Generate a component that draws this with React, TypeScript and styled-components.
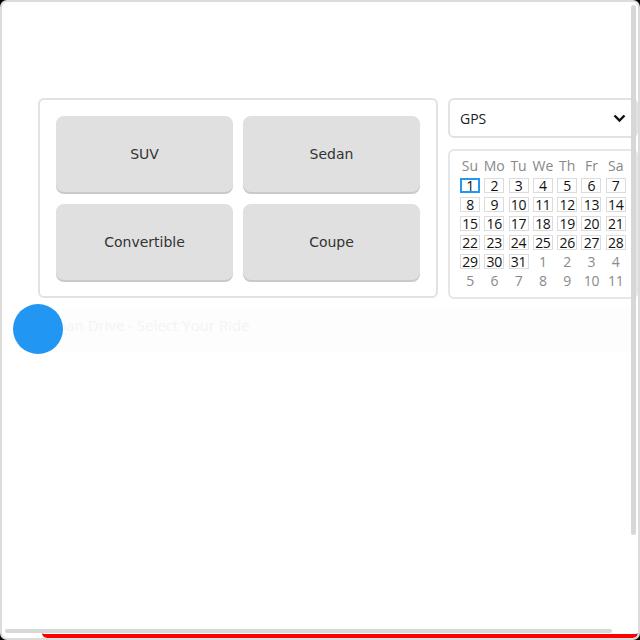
import React from "react";
import styled, { createGlobalStyle } from "styled-components";

const Global = createGlobalStyle`
  html, body { margin: 0; padding: 0; background: #000; }
  #root { width: 640px; height: 640px; }
  * { box-sizing: border-box; }
`;

const Frame = styled.div`
  width: 640px;
  height: 640px;
  border: 2px solid #dcdcdc;
  border-radius: 7px;
  background: #fff;
  overflow: hidden;
  display: flex;
  flex-direction: column;
  position: relative;
`;

const Scroller = styled.div`
  flex: 1;
  overflow: hidden;
  position: relative;
`;

const Content = styled.div`
  padding: 96px 0 0 36px;
  display: flex;
  flex-direction: column;
`;

const TopRow = styled.div`
  display: flex;
  gap: 10px;
  align-items: flex-start;
`;

const Panel = styled.div`
  width: 400px;
  height: 200px;
  border: 2px solid #e2e2e2;
  border-radius: 6px;
  padding: 16px;
  display: grid;
  grid-template-columns: 1fr 1fr;
  column-gap: 10px;
  row-gap: 12px;
`;

const TypeButton = styled.button`
  height: 76px;
  border: none;
  border-radius: 8px;
  background: #e0e0e0;
  box-shadow: 0 2px 0 #c9c9c9;
  font-family: "DejaVu Sans", Verdana, sans-serif;
  font-size: 14px;
  color: #333;
  cursor: pointer;
  padding: 0;
`;

const Side = styled.div`
  width: 190px;
  display: flex;
  flex-direction: column;
  gap: 11px;
`;

const Select = styled.div`
  height: 40px;
  border: 2px solid #e2e2e2;
  border-radius: 6px;
  display: flex;
  align-items: center;
  justify-content: space-between;
  padding: 0 10px 0 10px;
  font-family: "Open Sans", "Liberation Sans", sans-serif;
  font-size: 14px;
  color: #222;
`;

const Calendar = styled.div`
  height: 150px;
  border: 2px solid #e6e6e6;
  border-radius: 6px;
  padding: 8px 6px 8px 10px;
  display: grid;
  grid-template-columns: repeat(7, 1fr);
  grid-auto-rows: 15px;
  row-gap: 4px;
  font-family: "Open Sans", "Liberation Sans", sans-serif;
  font-size: 14px;
`;

const DayName = styled.div`
  width: 20px;
  line-height: 13px;
  color: #888;
  white-space: nowrap;
  display: flex;
  justify-content: center;
`;

const Day = styled.div<{ $current: boolean; $selected?: boolean }>`
  width: 20px;
  height: 15px;
  line-height: ${(p) => (p.$selected ? "11px" : "13px")};
  white-space: nowrap;
  display: flex;
  justify-content: center;
  color: ${(p) => (p.$current ? "#111" : "#8a8a8a")};
  border: ${(p) =>
    p.$selected ? "2px solid #2196f3" : p.$current ? "1px solid #dcdcdc" : "1px solid transparent"};
  letter-spacing: -0.3px;
`;

const HeadingRow = styled.div`
  position: relative;
  margin-top: 10px;
  height: 43px;
  display: flex;
  align-items: center;
  padding-left: 2px;
  padding-bottom: 12px;
  background: #fdfdfd;
`;

const Heading = styled.span`
  font-family: "Open Sans", "Liberation Sans", sans-serif;
  font-size: 15px;
  color: #f4f4f4;
`;

const Avatar = styled.div`
  position: absolute;
  left: -25px;
  top: -5px;
  width: 50px;
  height: 50px;
  border-radius: 50%;
  background: #2196f3;
`;

const VThumb = styled.div`
  position: absolute;
  right: 2px;
  top: 3px;
  width: 5px;
  height: 530px;
  border-radius: 3px;
  background: #d7d7d7;
`;

const HThumb = styled.div`
  position: absolute;
  left: 3px;
  bottom: 0px;
  width: 607px;
  height: 4px;
  border-radius: 3px;
  background: #d7d7d7;
`;

const RedBar = styled.div`
  margin-left: 40px;
  height: 5px;
  border-bottom: 4px solid #ff0000;
  border-radius: 0 0 8px 8px;
`;

const Chevron = () => (
  <svg width="13" height="9" viewBox="0 0 13 9">
    <path d="M1.5 1.5 L6.5 6.5 L11.5 1.5" fill="none" stroke="#111" strokeWidth="2.4" />
  </svg>
);

const dayNames = ["Su", "Mo", "Tu", "We", "Th", "Fr", "Sa"];
const types = ["SUV", "Sedan", "Convertible", "Coupe"];

export default function App() {
  const days: { n: number; cur: boolean }[] = [];
  for (let i = 1; i <= 31; i++) days.push({ n: i, cur: true });
  for (let i = 1; i <= 11; i++) days.push({ n: i, cur: false });
  return (
    <>
      <Global />
      <Frame>
        <Scroller>
          <Content>
            <TopRow>
              <Panel>
                {types.map((t) => (
                  <TypeButton key={t}>{t}</TypeButton>
                ))}
              </Panel>
              <Side>
                <Select>
                  <span>GPS</span>
                  <Chevron />
                </Select>
                <Calendar>
                  {dayNames.map((d) => (
                    <DayName key={d}>{d}</DayName>
                  ))}
                  {days.map((d, i) => (
                    <Day key={i} $current={d.cur} $selected={d.cur && d.n === 1}>
                      {d.n}
                    </Day>
                  ))}
                </Calendar>
              </Side>
            </TopRow>
            <HeadingRow>
              <Heading>Urban Drive - Select Your Ride</Heading>
              <Avatar />
            </HeadingRow>
          </Content>
          <VThumb />
          <HThumb />
        </Scroller>
        <RedBar />
      </Frame>
    </>
  );
}
